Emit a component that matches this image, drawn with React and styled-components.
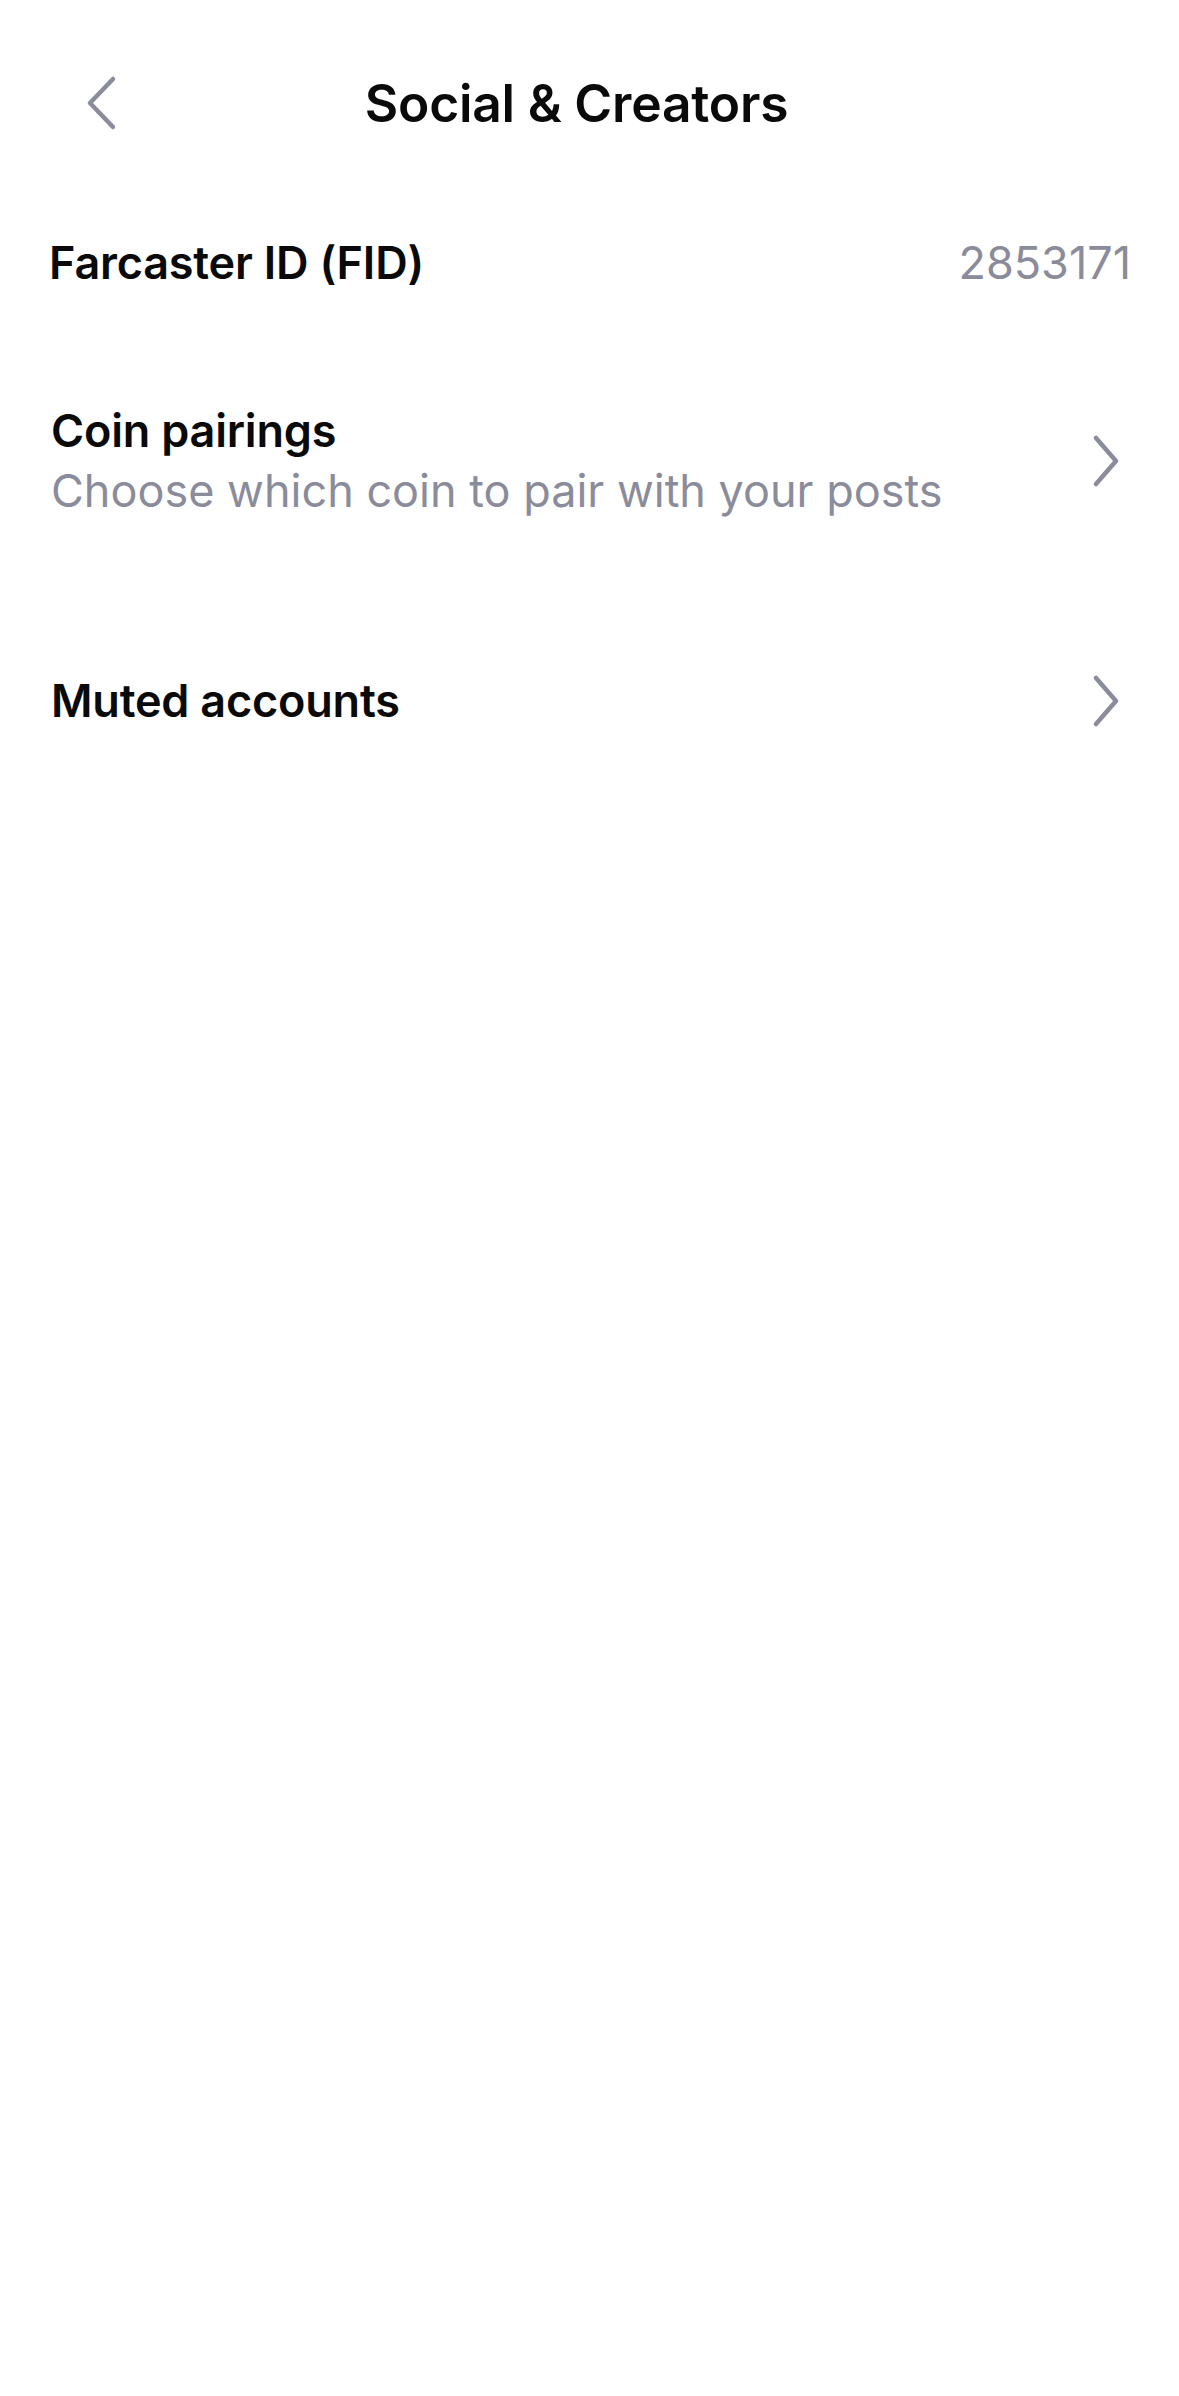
import React from "react";
import styled, { createGlobalStyle } from "styled-components";

const Global = createGlobalStyle`
  html, body { margin: 0; padding: 0; background: #ffffff; }
  body { font-family: Inter, "Noto Sans", "Liberation Sans", sans-serif; -webkit-font-smoothing: antialiased; }
`;

const Screen = styled.div`
  width: 1179px;
  min-height: 2396px;
  background: #ffffff;
  display: flex;
  flex-direction: column;
`;

const Header = styled.header`
  height: 205px;
  display: grid;
  grid-template-columns: 150px 1fr 176px;
  align-items: center;
`;

const BackButton = styled.button`
  border: 0;
  background: none;
  padding: 0 0 0 85px;
  height: 100%;
  display: flex;
  align-items: center;
  justify-content: flex-start;
  cursor: pointer;
`;

const Title = styled.h1`
  margin: 0;
  text-align: center;
  font-size: 51.5px;
  font-weight: 600;
  color: #0a0a0b;
  letter-spacing: -0.2px;
`;

const List = styled.div`
  display: flex;
  flex-direction: column;
`;

const Row = styled.div`
  display: flex;
  align-items: center;
  justify-content: space-between;
  padding: 0 ${(p) => p.$right || 51}px 0 ${(p) => p.$left || 51}px;
  height: ${(p) => p.$h}px;
`;

const TextCol = styled.div`
  display: flex;
  flex-direction: column;
`;

const Label = styled.div`
  font-size: 45px;
  font-weight: 600;
  color: #0a0a0b;
  line-height: 60px;
  letter-spacing: -0.2px;
`;

const Sub = styled.div`
  font-size: 45px;
  font-weight: 400;
  color: #8b8c9b;
  line-height: 60px;
`;

const Value = styled.div`
  font-size: 45px;
  font-weight: 400;
  color: #8b8c9b;
`;

const ChevronWrap = styled.span`
  display: flex;
  align-items: center;
  margin-right: ${(p) => p.$mr || 0}px;
`;

const Chevron = ({ dir = "right" }) =>
  dir === "left" ? (
    <svg width="32" height="56" viewBox="0 0 32 56" fill="none">
      <path d="M28 4 L5 28 L28 52" stroke="#8b8c9b" strokeWidth="4.5" strokeLinecap="round" strokeLinejoin="round" />
    </svg>
  ) : (
    <svg width="28" height="54" viewBox="0 0 28 54" fill="none">
      <path d="M4 4 L24 27 L4 50" stroke="#8b8c9b" strokeWidth="4.5" strokeLinecap="round" strokeLinejoin="round" />
    </svg>
  );

export default function App() {
  return (
    <Screen>
      <Global />
      <Header>
        <BackButton aria-label="Back">
          <Chevron dir="left" />
        </BackButton>
        <Title>Social &amp; Creators</Title>
        <span />
      </Header>
      <List>
        <Row $h={115} $left={49} $right={48}>
          <Label>Farcaster ID (FID)</Label>
          <Value>2853171</Value>
        </Row>
        <Row $h={282} $left={51}>
          <TextCol>
            <Label>Coin pairings</Label>
            <Sub>Choose which coin to pair with your posts</Sub>
          </TextCol>
          <ChevronWrap $mr={8}>
            <Chevron />
          </ChevronWrap>
        </Row>
        <Row $h={198} $left={51}>
          <Label>Muted accounts</Label>
          <ChevronWrap $mr={8}>
            <Chevron />
          </ChevronWrap>
        </Row>
      </List>
    </Screen>
  );
}
